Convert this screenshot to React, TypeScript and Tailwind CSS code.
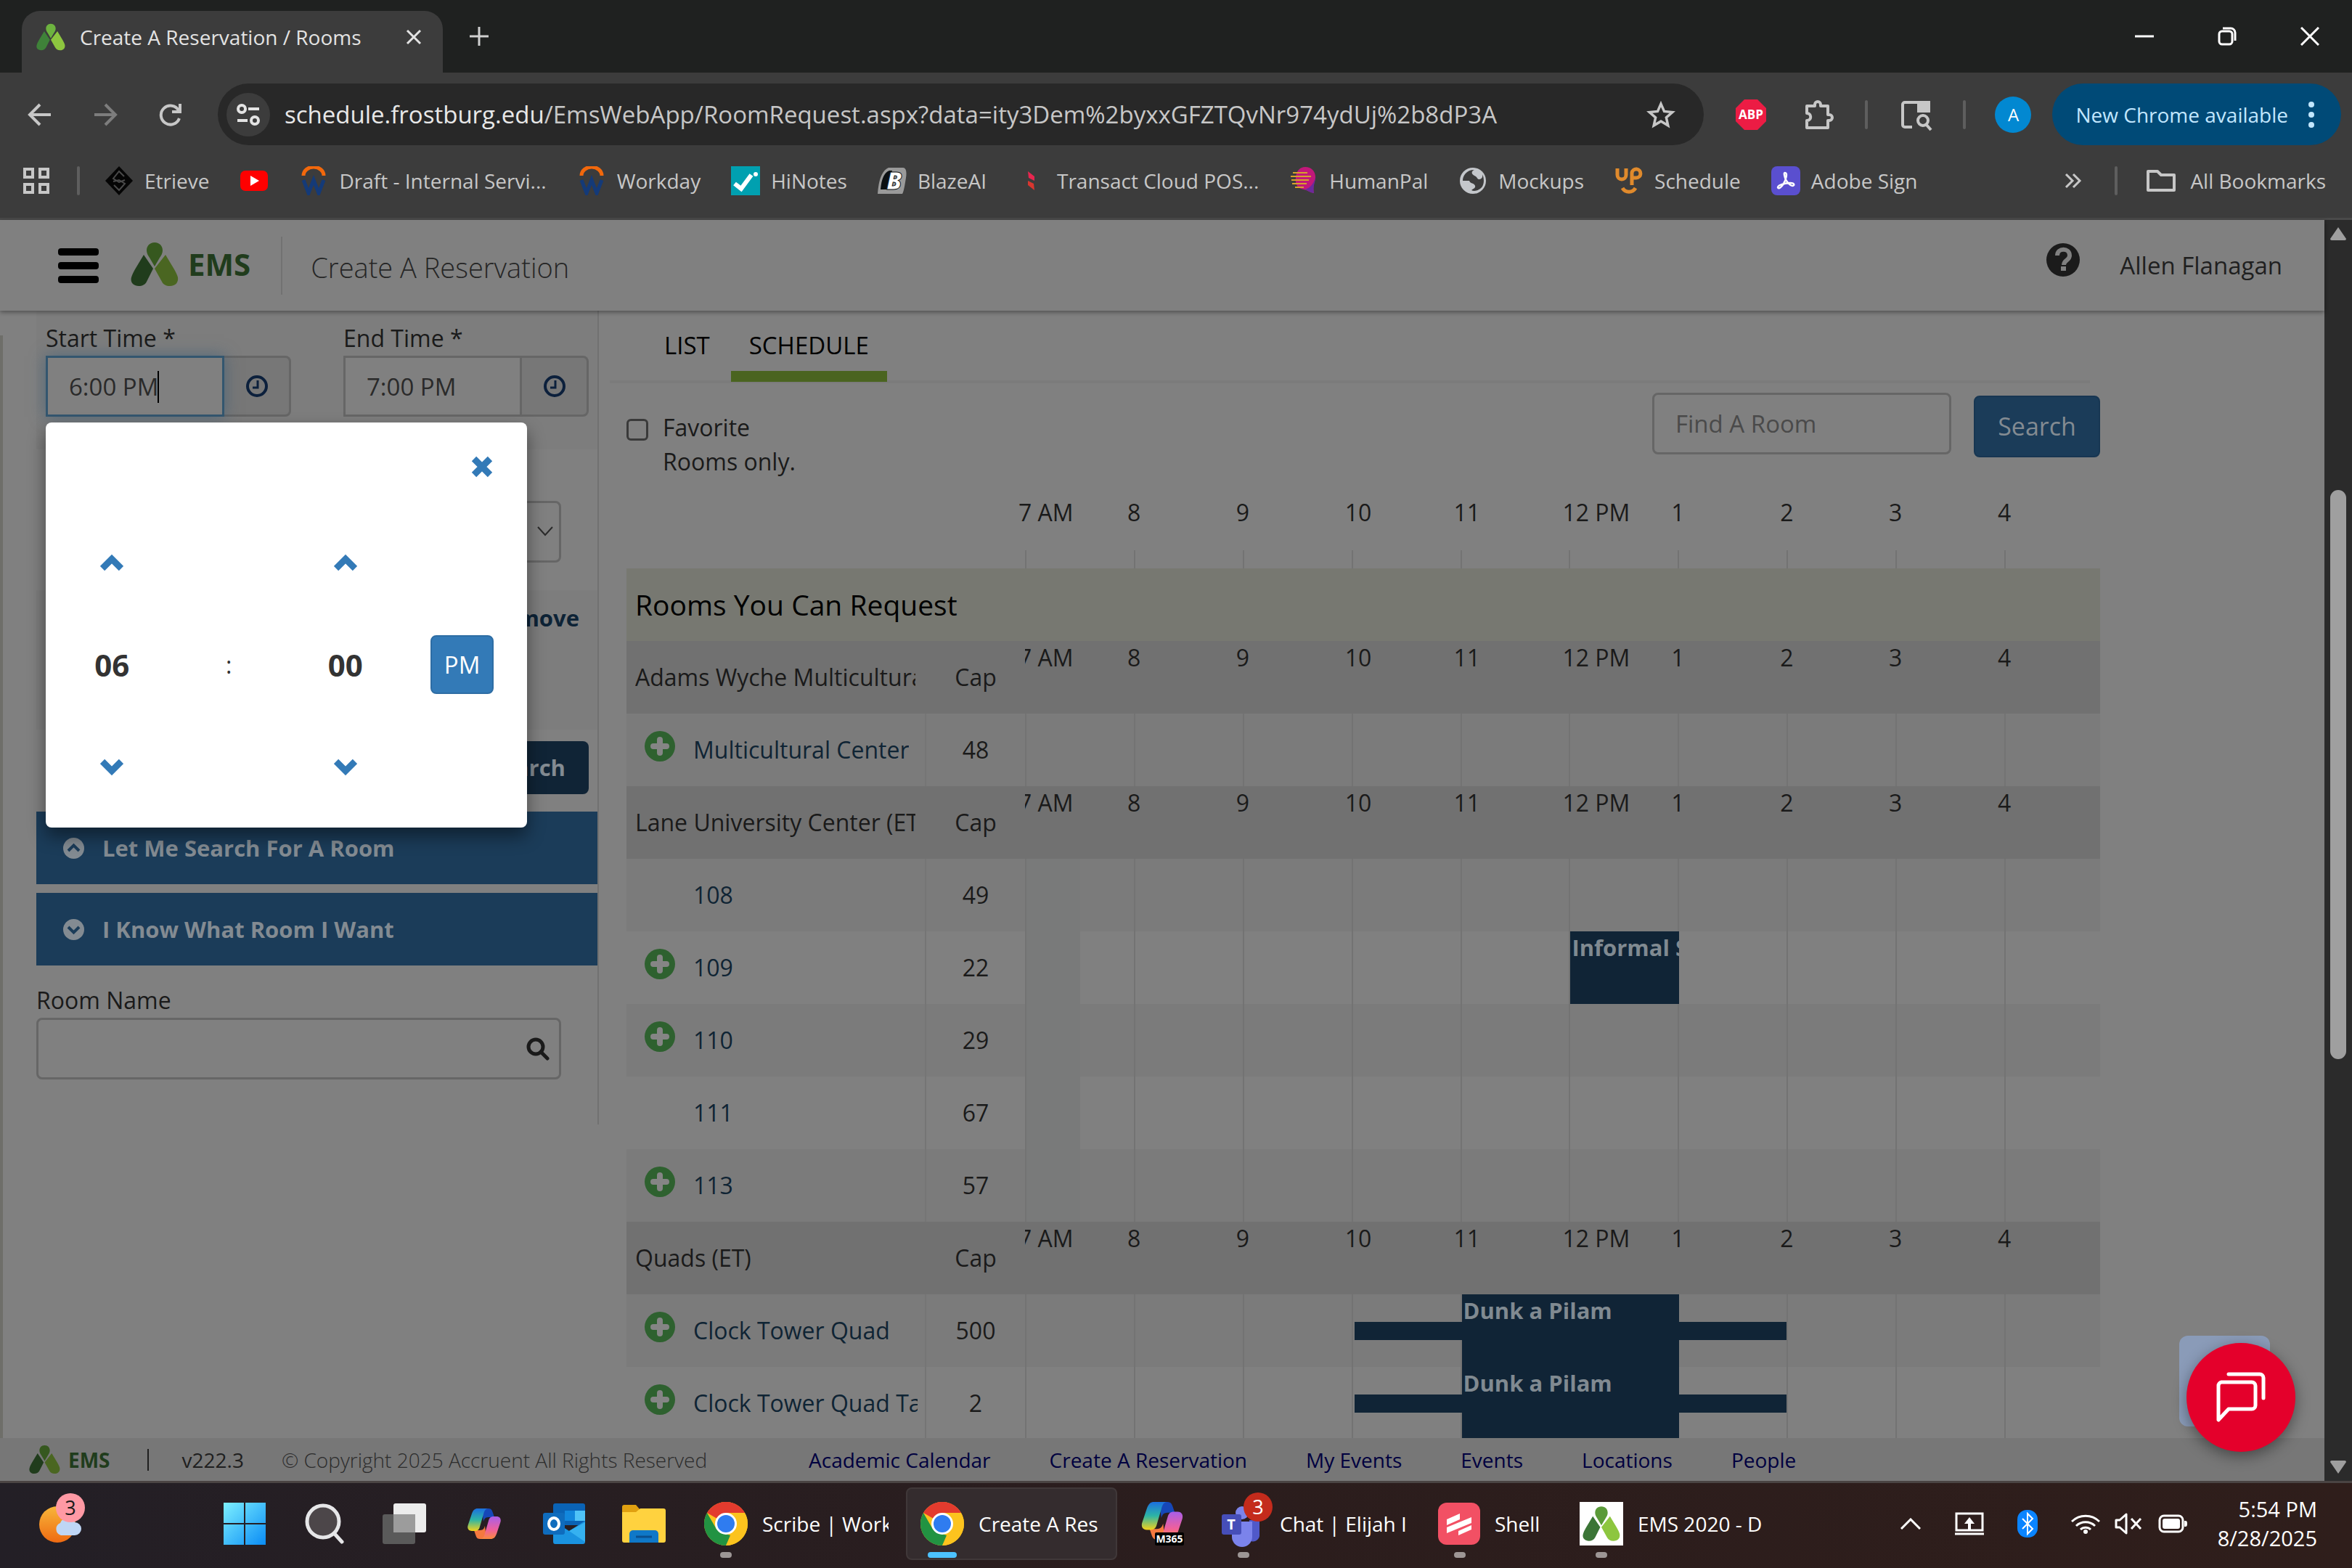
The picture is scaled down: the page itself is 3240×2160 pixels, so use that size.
import type { ReactNode } from 'react';

interface Booking {
    title: string;
    hours: number;
    lead?: boolean;
}

interface Room {
    name: string;
    cap: number;
    canAdd: boolean;
    bookings?: Record<string, Booking>;
}

interface Building {
    name: string;
    closedEarly: boolean;
    rooms: Room[];
}

const hours = ['7 AM', '8', '9', '10', '11', '12 PM', '1', '2', '3', '4'];

const buildings: Building[] = [
    {
        name: 'Adams Wyche Multicultural',
        closedEarly: false,
        rooms: [{ name: 'Multicultural Center', cap: 48, canAdd: true }],
    },
    {
        name: 'Lane University Center (ET)',
        closedEarly: true,
        rooms: [
            { name: '108', cap: 49, canAdd: false },
            { name: '109', cap: 22, canAdd: true, bookings: { '12 PM': { title: 'Informal S', hours: 1 } } },
            { name: '110', cap: 29, canAdd: true },
            { name: '111', cap: 67, canAdd: false },
            { name: '113', cap: 57, canAdd: true },
        ],
    },
    {
        name: 'Quads (ET)',
        closedEarly: false,
        rooms: [
            { name: 'Clock Tower Quad', cap: 500, canAdd: true, bookings: { '11': { title: 'Dunk a Pilam', hours: 2, lead: true } } },
            { name: 'Clock Tower Quad Table', cap: 2, canAdd: true, bookings: { '11': { title: 'Dunk a Pilam', hours: 2, lead: true } } },
        ],
    },
];

/* ---------- Shared drawings ---------- */

function EmsMark({ className, top, left, right }: { className: string; top: string; left: string; right: string }) {
    return (
        <svg className={className} viewBox="0 0 66 60">
            <path fill={top} d="M33 0c7 0 11 5 11 11 0 4-2 7-4 10l-7 12-7-12c-2-3-4-6-4-10C22 5 26 0 33 0z" />
            <path fill={left} d="M18 17l13 19-9 18c-2 4-6 6-11 6C4 60-1 55 1 48c1-4 3-7 5-11z" />
            <path fill={right} d="M48 17L33 36l10 18c2 4 6 6 11 6 8 0 12-5 11-12-1-4-3-7-5-11z" />
        </svg>
    );
}

function ChromeLogo() {
    return (
        <svg className="size-[60px] shrink-0" viewBox="0 0 60 60">
            <circle cx="30" cy="30" r="30" fill="#fcc31e" />
            <path fill="#e33b2e" d="M30 30L4 15a30 30 0 0 1 52 0z" />
            <path fill="#229342" d="M30 60A30 30 0 0 1 4 15l13 22.500L30 44l0 0 6 2z" />
            <path fill="#fcc31e" d="M30 15h26a30 30 0 0 1-26 45l13-22.500z" />
            <circle cx="30" cy="30" r="15" fill="#fff" />
            <circle cx="30" cy="30" r="12" fill="#2f7cf0" />
        </svg>
    );
}

function CopilotLogo({ className }: { className: string }) {
    return (
        <svg className={className} viewBox="0 0 46 42">
            <defs>
                <linearGradient id="cpA" x1="0" y1="0" x2="0" y2="1">
                    <stop offset="0" stopColor="#1b6fe0" />
                    <stop offset="0.5" stopColor="#2db5a5" />
                    <stop offset="1" stopColor="#f3d11b" />
                </linearGradient>
                <linearGradient id="cpB" x1="0" y1="0" x2="0" y2="1">
                    <stop offset="0" stopColor="#a85ee8" />
                    <stop offset="0.6" stopColor="#f0609b" />
                    <stop offset="1" stopColor="#fb8b3c" />
                </linearGradient>
            </defs>
            <path fill="#1647b8" d="M20 0h9c4 0 5 3 6 6l2 6h-8c-5 0-6 3-7 6z" />
            <path fill="#f5793f" d="M26 42h-9c-4 0-5-3-6-6l-2-6h8c5 0 6-3 7-6z" />
            <path fill="url(#cpA)" d="M14 0h14c-4 1-5 4-6 8l-5 17c-1 4-3 6-7 6H6c-5 0-7-4-5-9L6 7c2-5 4-7 8-7z" />
            <path fill="url(#cpB)" d="M32 42H18c4-1 5-4 6-8l5-17c1-4 3-6 7-6h4c5 0 7 4 5 9l-5 15c-2 5-4 7-8 7z" />
        </svg>
    );
}

function ClockIcon() {
    return (
        <svg className="size-[30px]" viewBox="0 0 30 30" fill="none" stroke="#0c203c">
            <circle cx="15" cy="15" r="13" strokeWidth="4" />
            <path d="M16 7v10H9" strokeWidth="3" />
        </svg>
    );
}

function PickerArrow({ down = false }: { down?: boolean }) {
    return (
        <svg className="h-[24px] w-[32px]" viewBox="0 0 32 24" fill="none" stroke="#337ab7" strokeWidth="9">
            <path d={down ? 'M3 4l13 13L29 4' : 'M3 20L16 7l13 13'} />
        </svg>
    );
}

/* ---------- Browser chrome ---------- */

function TabStrip() {
    return (
        <header className="flex h-[100px] shrink-0 items-end bg-[#1f2120] text-[#e3e3e3]">
            <div className="ml-[30px] flex h-[85px] w-[580px] items-center rounded-t-[25px] bg-[#3c3c3c] pb-[14px] pl-5">
                <EmsMark className="mr-[20px] size-[40px]" top="#6db33f" left="#3f8239" right="#8dc63f" />
                <span className="flex-1 whitespace-nowrap text-[28px]">Create A Reservation / Rooms</span>
                <button aria-label="Close tab" className="mr-[28px]">
                    <svg className="size-6" viewBox="0 0 24 24" stroke="#e3e3e3" strokeWidth="3"><path d="M3 3l18 18M21 3L3 21" /></svg>
                </button>
            </div>
            <button aria-label="New tab" className="mb-[36px] ml-[36px]">
                <svg className="size-7" viewBox="0 0 28 28" stroke="#d0d0d0" strokeWidth="3"><path d="M14 1v26M1 14h26" /></svg>
            </button>
            <div className="ml-auto flex items-center gap-[88px] self-center pr-[45px]">
                <button aria-label="Minimize">
                    <svg className="size-[26px]" viewBox="0 0 26 26" stroke="#fff" strokeWidth="3"><path d="M0 13h26" /></svg>
                </button>
                <button aria-label="Restore">
                    <svg className="size-[26px]" viewBox="0 0 26 26" fill="none" stroke="#fff" strokeWidth="3">
                        <rect x="2" y="6" width="18" height="18" rx="4" />
                        <path d="M7 2h11a6 6 0 0 1 6 6v11" />
                    </svg>
                </button>
                <button aria-label="Close">
                    <svg className="size-[26px]" viewBox="0 0 26 26" stroke="#fff" strokeWidth="3"><path d="M1 1l24 24M25 1L1 25" /></svg>
                </button>
            </div>
        </header>
    );
}

function Toolbar() {
    return (
        <div className="flex h-[115px] shrink-0 items-center bg-[#3c3c3c] pr-[15px]">
            <div className="flex w-[300px] items-center gap-[56px] pl-[38px]">
                <button aria-label="Back">
                    <svg className="size-[34px]" viewBox="0 0 34 34" fill="none" stroke="#c7c7c7" strokeWidth="4"><path d="M17 3L3 17l14 14M3 17h29" /></svg>
                </button>
                <button aria-label="Forward">
                    <svg className="size-[34px]" viewBox="0 0 34 34" fill="none" stroke="#7d7d7d" strokeWidth="4"><path d="M17 3l14 14-14 14M31 17H2" /></svg>
                </button>
                <button aria-label="Reload">
                    <svg className="size-[34px]" viewBox="0 0 34 34" fill="none" stroke="#c7c7c7" strokeWidth="4">
                        <path d="M29 22a13 13 0 1 1-1-11M30 2v11H19" />
                    </svg>
                </button>
            </div>
            <div className="flex h-[85px] flex-1 items-center rounded-full bg-[#282828] pl-3 pr-[38px]">
                <span className="flex size-[60px] shrink-0 items-center justify-center rounded-full bg-[#3c3c3c]">
                    <svg className="size-[32px]" viewBox="0 0 32 32" fill="none" stroke="#e3e3e3" strokeWidth="4">
                        <circle cx="7" cy="8" r="5" />
                        <path d="M16 8h15M1 24h14" />
                        <circle cx="25" cy="24" r="5" />
                    </svg>
                </span>
                <div className="ml-[20px] flex-1 whitespace-nowrap text-[33px] text-[#c7c7c7]">
                    <span className="text-[#e8e8e8]">schedule.frostburg.edu</span>/EmsWebApp/RoomRequest.aspx?data=ity3Dem%2byxxGFZTQvNr974ydUj%2b8dP3A
                </div>
                <button aria-label="Bookmark this tab">
                    <svg className="size-[42px]" viewBox="0 0 24 24" fill="none" stroke="#c7c7c7" strokeWidth="2">
                        <path d="M12 3.500l2.600 5.900 6.400.6-4.800 4.200 1.400 6.300L12 17.200l-5.600 3.300 1.400-6.300L3 10l6.400-.6z" />
                    </svg>
                </button>
            </div>
            <div className="flex w-[480px] items-center pl-[44px]">
                <svg className="size-[42px]" viewBox="0 0 42 42">
                    <path fill="#ec1c44" d="M12 0h18l12 12v18L30 42H12L0 30V12z" />
                    <text x="21" y="27" textAnchor="middle" fontSize="17" fontWeight="700" fill="#fff">ABP</text>
                </svg>
                <svg className="ml-[50px] size-[44px]" viewBox="0 0 44 44" fill="none" stroke="#c7c7c7" strokeWidth="4">
                    <path d="M6 10h11V8a4 4 0 0 1 8 0v2h10v12h2a4 4 0 0 1 0 8h-2v10H6V30c7 0 7-10 0-10z" strokeLinejoin="round" />
                </svg>
                <span className="ml-[42px] h-10 w-1 rounded bg-[#5e5e5e]" />
                <svg className="ml-[43px] size-[46px]" viewBox="0 0 46 46" fill="none" stroke="#c7c7c7" strokeWidth="4">
                    <path d="M18 40H8a3 3 0 0 1-3-3V9a3 3 0 0 1 3-3h33v14" />
                    <path d="M27 6h14v12H27z" fill="#c7c7c7" />
                    <circle cx="33" cy="31" r="7" />
                    <path d="M37 36l7 8" />
                </svg>
                <span className="ml-[42px] h-10 w-1 rounded bg-[#5e5e5e]" />
                <span className="ml-[40px] flex size-[50px] items-center justify-center rounded-full bg-[#0288d1] text-[24px] text-white">A</span>
            </div>
            <button className="flex h-[85px] items-center gap-[28px] whitespace-nowrap rounded-full bg-[#004a77] pl-[32px] pr-[37px] text-[28px] text-[#c2e7ff]">
                New Chrome available
                <svg className="h-[36px] w-[8px]" viewBox="0 0 8 36" fill="#c2e7ff">
                    <circle cx="4" cy="4" r="4" />
                    <circle cx="4" cy="18" r="4" />
                    <circle cx="4" cy="32" r="4" />
                </svg>
            </button>
        </div>
    );
}

function WorkdayIcon() {
    return (
        <svg className="size-10" viewBox="0 0 40 40" fill="none">
            <path d="M6 13a14 12 0 0 1 28 0" stroke="#f2680c" strokeWidth="5" />
            <path d="M6 19l7 18 7-18 7 18 7-18" stroke="#143a78" strokeWidth="5" />
        </svg>
    );
}

const bookmarks: { label: string; icon: ReactNode }[] = [
    {
        label: 'Etrieve',
        icon: (
            <svg className="size-10" viewBox="0 0 40 40">
                <path fill="#050505" d="M20 0l19 20-19 20L1 20z" />
                <path fill="none" stroke="#4a4a4a" strokeWidth="2" d="M27 14l-7-7-8 10 8 5 8-3M13 26l7 7 8-9-8-5-8 2" />
            </svg>
        ),
    },
    {
        label: '',
        icon: (
            <svg className="size-10" viewBox="0 0 40 40">
                <rect x="1" y="6" width="38" height="28" rx="7" fill="#f00" />
                <path d="M15 13l12 7-12 7z" fill="#fff" />
            </svg>
        ),
    },
    { label: 'Draft - Internal Servi...', icon: <WorkdayIcon /> },
    { label: 'Workday', icon: <WorkdayIcon /> },
    {
        label: 'HiNotes',
        icon: (
            <svg className="size-10" viewBox="0 0 40 40">
                <path fill="#00a0b0" d="M0 0h40v40H0z" />
                <path fill="none" stroke="#fff" strokeWidth="6" d="M5 24l9 7 14-19" />
                <circle cx="34" cy="11" r="3" fill="#fff" />
            </svg>
        ),
    },
    {
        label: 'BlazeAI',
        icon: (
            <svg className="size-10" viewBox="0 0 40 40">
                <path fill="#9a9a9a" d="M15 2h20c5 0 5 8 4 14s-3 20-5 22H0C1 22 5 6 15 2z" />
                <path fill="#0b0f12" d="M16 6c-8 3-11 14-12 26h9L20 6z" />
                <text x="12" y="32" fontSize="34" fontWeight="800" fontStyle="italic" fill="#fff" stroke="#0b0f12" strokeWidth="1">B</text>
            </svg>
        ),
    },
    {
        label: 'Transact Cloud POS...',
        icon: (
            <svg className="size-10" viewBox="0 0 40 40">
                <path fill="#e8264f" d="M15 7l9 7v6l-8-4z" />
                <path fill="#d8362f" d="M24 33l-9-7v-6l8 4z" />
            </svg>
        ),
    },
    {
        label: 'HumanPal',
        icon: (
            <svg className="size-10" viewBox="0 0 40 40">
                <path fill="#c2187a" d="M22 1c9 0 15 7 14 16-1 6-4 9-2 20-6-1-9-4-14-5C10 30 8 24 9 15 10 6 15 1 22 1z" />
                <path fill="#6b2a9c" d="M36 15c0 8-4 12-2 22-6-1-9-4-13-5 8-2 13-8 15-17z" />
                <path stroke="#d8a02c" strokeWidth="2" fill="none" d="M5 9h20M2 14h28M3 19h24M4 24h20M8 29h12" />
            </svg>
        ),
    },
    {
        label: 'Mockups',
        icon: (
            <svg className="size-10" viewBox="0 0 40 40">
                <circle cx="20" cy="20" r="18" fill="#c4c7cb" />
                <path fill="#3c3c3c" d="M22 5c-5 2-4 6 0 8 5 2 3 5 7 5 3 0 5-3 4-7 3 6 3 16-3 20-4 3-9 4-12 2 2-2 6-3 5-6-1-4-7-3-8-7H6c0-7 5-15 16-15z" />
            </svg>
        ),
    },
    {
        label: 'Schedule',
        icon: (
            <svg className="size-10" viewBox="0 0 40 40" fill="none" stroke="#e08a2c" strokeWidth="5">
                <path d="M4 3v9a6 6 0 0 0 12 0V3M24 26V9a6 6 0 1 1 6 7h-6" />
                <path d="M11 30c4 7 14 7 18 0" />
            </svg>
        ),
    },
    {
        label: 'Adobe Sign',
        icon: (
            <svg className="size-10" viewBox="0 0 40 40">
                <rect width="40" height="40" rx="8" fill="#5a4fcf" />
                <path fill="none" stroke="#fff" strokeWidth="2.500" d="M19 9c4 0 1 10-2 15s-7 8-8 5c0-3 10-6 17-6s6 4 3 4-9-7-10-11-2-7 0-7z" />
            </svg>
        ),
    },
];

function BookmarksBar() {
    return (
        <nav className="flex h-[88px] shrink-0 items-center border-b-[3px] border-[#4a4a4a] bg-[#3c3c3c] pb-[18px] pl-[31px] pr-[36px] text-[28px] text-[#c7c7c7]">
            <svg className="size-[38px]" viewBox="0 0 38 38" fill="none" stroke="#c7c7c7" strokeWidth="4">
                <path d="M3 3h11v11H3zM24 3h11v11H24zM3 24h11v11H3zM24 24h11v11H24z" />
            </svg>
            <span className="ml-[37px] mr-[34px] h-10 w-1 rounded bg-[#5e5e5e]" />
            <div className="flex flex-1 items-center gap-[42px]">
                {bookmarks.map((item, index) => (
                    <a key={index} href="#bookmark" aria-label={item.label || 'YouTube'} className="flex items-center gap-[15px] whitespace-nowrap">
                        {item.icon}
                        {item.label && <span>{item.label}</span>}
                    </a>
                ))}
            </div>
            <svg className="size-6" viewBox="0 0 24 24" fill="none" stroke="#c7c7c7" strokeWidth="3"><path d="M2 3l9 9-9 9M12 3l9 9-9 9" /></svg>
            <span className="ml-[45px] mr-[40px] h-10 w-1 rounded bg-[#5e5e5e]" />
            <a href="#all" className="flex items-center gap-[20px] whitespace-nowrap">
                <svg className="h-[32px] w-[40px]" viewBox="0 0 40 32" fill="none" stroke="#c7c7c7" strokeWidth="4" strokeLinejoin="round">
                    <path d="M2 29V3h13l5 5h18v21z" />
                </svg>
                All Bookmarks
            </a>
        </nav>
    );
}

/* ---------- EMS page ---------- */

function PageHeader() {
    return (
        <div className="relative z-10 flex h-[125px] shrink-0 items-center bg-[#808080] pl-[80px] pr-[58px] shadow-[0_2px_6px_rgba(0,0,0,0.4)]">
            <button aria-label="Menu" className="flex w-14 flex-col gap-[9px]">
                <span className="h-[10px] rounded-sm bg-black" />
                <span className="h-[10px] rounded-sm bg-black" />
                <span className="h-[10px] rounded-sm bg-black" />
            </button>
            <a href="#home" className="ml-[44px] flex items-center gap-[13px] pb-[4px]">
                <EmsMark className="h-[60px] w-[66px]" top="#36581f" left="#203c1c" right="#4a6621" />
                <span className="text-[42px] font-bold text-[#203c1c]">EMS</span>
            </a>
            <span className="ml-[42px] h-[80px] w-[2px] bg-[#727272]" />
            <h1 className="ml-[39px] pt-[6px] text-[38px] font-light text-[#262626]">Create A Reservation</h1>
            <button aria-label="Help" className="ml-auto pb-4">
                <svg className="size-[46px]" viewBox="0 0 46 46">
                    <circle cx="23" cy="23" r="23" fill="#1b1b1b" />
                    <path d="M15 17c0-11 17-11 17 0 0 7-8 6-8 13" fill="none" stroke="#808080" strokeWidth="6" />
                    <path d="M20 32h7v6h-7z" fill="#808080" />
                </svg>
            </button>
            <a href="#account" className="ml-[55px] text-[33px] text-[#1f1f1f]">Allen Flanagan</a>
        </div>
    );
}

function TimePicker() {
    return (
        <div role="dialog" aria-label="Start time" className="absolute left-0 top-full z-20 mt-[8px] w-[663px] rounded-lg bg-white pb-[13px] pl-[11px] pr-[9px] text-[#333] shadow-[0_12px_24px_rgba(0,0,0,0.45)]">
            <div className="flex h-[122px] items-center justify-end pr-[38px]">
                <button aria-label="Close picker">
                    <svg className="size-[30px]" viewBox="0 0 30 30" stroke="#337ab7" strokeWidth="9"><path d="M4 4l22 22M26 4L4 26" /></svg>
                </button>
            </div>
            <div className="grid auto-rows-[141px] grid-cols-4 place-items-center">
                <button aria-label="Hour up"><PickerArrow /></button>
                <span />
                <button aria-label="Minute up"><PickerArrow /></button>
                <span />
                <button className="text-[42px] font-bold">06</button>
                <span>:</span>
                <button className="text-[42px] font-bold">00</button>
                <button className="h-[81px] w-[87px] rounded-lg border-2 border-[#2e6da4] bg-[#337ab7] text-[33px] text-white">PM</button>
                <button aria-label="Hour down"><PickerArrow down /></button>
                <span />
                <button aria-label="Minute down"><PickerArrow down /></button>
            </div>
        </div>
    );
}

function TimeField({ id, label, value, active = false, children }: { id: string; label: string; value: string; active?: boolean; children?: ReactNode }) {
    return (
        <div className="relative w-[338px]">
            <label htmlFor={id} className="block h-[48px]">{label}</label>
            <div className="flex h-[84px]">
                <div
                    className={
                        active
                            ? 'relative w-[246px] border-[3px] border-[#33566f] bg-[#808080] shadow-[0_0_20px_rgba(51,90,120,0.6)]'
                            : 'relative w-[246px] border-[3px] border-[#666] bg-[#808080]'
                    }
                >
                    <input id={id} defaultValue={value} className="h-full w-full bg-transparent pl-[29px] text-[33px] text-[#2a2a2a] outline-none" />
                    {active && <span className="absolute left-[151px] top-[18px] h-[44px] w-[2px] bg-black" />}
                </div>
                <button aria-label={`Pick ${label}`} className="flex w-[92px] items-center justify-center rounded-r-lg border-[3px] border-l-0 border-[#666] bg-[#777]">
                    <ClockIcon />
                </button>
            </div>
            {children}
        </div>
    );
}

function AccordionButton({ label, open }: { label: string; open: boolean }) {
    return (
        <button className="mb-3 flex h-[100px] w-full items-center gap-[25px] bg-[#1b3c59] pl-[37px] text-[31px] font-bold text-[#838b92]">
            <svg className="size-[29px]" viewBox="0 0 29 29">
                <circle cx="14.500" cy="14.500" r="14.500" fill="#838b92" />
                <path d={open ? 'M7 18l7.500-7.500L22 18' : 'M7 11l7.500 7.500L22 11'} fill="none" stroke="#1b3c59" strokeWidth="4" />
            </svg>
            {label}
        </button>
    );
}

function Sidebar() {
    return (
        <aside className="h-[1121px] w-[821px] shrink-0 border-r-2 border-[#717171] pl-[46px]">
            <div className="flex h-[191px] items-start gap-[72px] bg-[#7d7d7d] pl-[13px] pt-[14px]">
                <TimeField id="start" label="Start Time *" value="6:00 PM" active>
                    <TimePicker />
                </TimeField>
                <TimeField id="end" label="End Time *" value="7:00 PM" />
            </div>
            <div className="relative h-[194px] pl-[13px] pr-[50px] pt-[71px]">
                <select aria-label="Time zone" className="h-[85px] w-full appearance-none rounded-lg border-[3px] border-[#666] bg-[#808080]" />
                <svg className="pointer-events-none absolute right-[61px] top-[106px] h-[14px] w-[22px]" viewBox="0 0 22 14" fill="none" stroke="#2a2a2a" strokeWidth="2"><path d="M1 1l10 11L21 1" /></svg>
            </div>
            <div className="flex h-[192px] justify-end bg-[#7d7d7d] pr-[25px] pt-[15px]">
                <a href="#remove" className="text-[31px] font-bold text-[#0d2336]">Remove</a>
            </div>
            <div className="flex h-[113px] justify-end pr-[12px] pt-4">
                <button className="h-[73px] rounded-lg bg-[#102436] px-[32px] text-[31px] font-bold text-[#838b92]">Search</button>
            </div>
            <AccordionButton label="Let Me Search For A Room" open />
            <AccordionButton label="I Know What Room I Want" open={false} />
            <label htmlFor="room" className="mt-[24px] block h-[48px]">Room Name</label>
            <div className="mr-[50px] flex h-[85px] items-center rounded-lg border-[3px] border-[#666] pr-[13px]">
                <input id="room" className="h-full min-w-0 flex-1 bg-transparent px-4 outline-none" />
                <svg className="size-[32px]" viewBox="0 0 32 32" fill="none" stroke="#1a1a1a" strokeWidth="5">
                    <circle cx="13" cy="13" r="10" />
                    <path d="M20 20l9 9" strokeLinecap="round" />
                </svg>
            </div>
        </aside>
    );
}

function BookingBlock({ booking }: { booking: Booking }) {
    // each hour cell adds a 2px rule to the width that percentages resolve against
    const span = `calc(${booking.hours * 100}% + ${booking.hours * 2}px)`;
    return (
        <>
            {booking.lead && (
                <>
                    <div className="absolute right-full top-[38px] h-[25px] w-full bg-[#102436]" />
                    <div className="absolute top-[38px] z-10 h-[25px] w-full bg-[#102436]" style={{ left: span }} />
                </>
            )}
            <a href="#booking" className="absolute inset-y-0 left-0 z-10 overflow-hidden whitespace-nowrap bg-[#102436] pl-[2px] text-[31px] font-bold leading-[45px] text-[#808a91]" style={{ width: span }}>
                {booking.title}
            </a>
        </>
    );
}

function Schedule() {
    return (
        <table className="w-full table-fixed border-separate border-spacing-0 text-left">
            <colgroup>
                <col className="w-[413px]" />
                <col className="w-[136px]" />
                {hours.map((hour) => (
                    <col key={hour} className={hour === '4' ? 'w-[132px]' : ''} />
                ))}
            </colgroup>
            <thead>
                <tr className="h-[100px]">
                    <td colSpan={2} />
                    {hours.map((hour) => (
                        <th key={hour} scope="col" className="p-0 align-top font-normal leading-[45px]">
                            <div className="-ml-[9px] h-[75px] whitespace-nowrap">{hour}</div>
                            <div className="h-[25px] border-l-2 border-[#737373]" />
                        </th>
                    ))}
                </tr>
                <tr className="h-[100px] bg-[#777871]">
                    <th colSpan={12} className="p-0 pl-[12px] text-[39px] font-normal text-black">Rooms You Can Request</th>
                </tr>
            </thead>
            {buildings.map((building) => (
                <tbody key={building.name}>
                    <tr className="h-[100px] bg-[#717171]">
                        <th scope="rowgroup" className="overflow-hidden whitespace-nowrap p-0 pl-[12px] pr-[15px] font-normal">
                            <div className="overflow-hidden">{building.name}</div>
                        </th>
                        <td className="p-0 text-center">Cap</td>
                        {hours.map((hour, index) => (
                            <td key={hour} className={index === 0 ? 'overflow-hidden p-0 align-top leading-[45px]' : 'p-0 align-top leading-[45px]'}>
                                <div className="-ml-[9px] whitespace-nowrap">{hour}</div>
                            </td>
                        ))}
                    </tr>
                    {building.rooms.map((room, row) => (
                        <tr key={room.name} className={row % 2 === 0 ? 'h-[100px] bg-[#7b7b7b]' : 'h-[100px]'}>
                            <th scope="row" className="border-r-2 border-[#757575] p-0 pl-[25px] pr-[10px] font-normal">
                                <div className="flex items-center gap-[25px]">
                                    <span className="w-[42px] shrink-0 pb-[10px]">
                                        {room.canAdd && (
                                            <button aria-label={`Add ${room.name}`} className="block">
                                                <svg className="size-[42px]" viewBox="0 0 42 42">
                                                    <circle cx="21" cy="21" r="21" fill="#2e612f" />
                                                    <path d="M21 12v18M12 21h18" stroke="#858585" strokeWidth="8" strokeLinecap="round" />
                                                </svg>
                                            </button>
                                        )}
                                    </span>
                                    <a href="#room" className="overflow-hidden whitespace-nowrap text-[#0f2434]">{room.name}</a>
                                </div>
                            </th>
                            <td className="p-0 text-center">{room.cap}</td>
                            {hours.map((hour, index) => (
                                <td key={hour} className="relative border-l-2 border-[#737373] p-0">
                                    {building.closedEarly && index === 0 && <div className="h-[100px] w-1/2 bg-[#797a7a]" />}
                                    {room.bookings?.[hour] && <BookingBlock booking={room.bookings[hour]} />}
                                </td>
                            ))}
                        </tr>
                    ))}
                </tbody>
            ))}
        </table>
    );
}

function RoomResults() {
    return (
        <main className="min-w-0 flex-1 pl-[15px] pr-[309px]">
            <div role="tablist" className="mr-[14px] flex h-[100px] border-b-4 border-[#7b7b7b] pl-[50px] text-[33px] text-black">
                <button role="tab" className="h-[98px] border-b-[15px] border-transparent px-[25px] pt-3">LIST</button>
                <button role="tab" aria-selected="true" className="ml-[4px] h-[98px] border-b-[15px] border-[#4a6420] px-[25px] pt-3">SCHEDULE</button>
            </div>
            <div className="pl-[23px]">
                <div className="flex h-[155px] items-start">
                    <label className="flex w-[260px] items-start gap-[20px] pt-[37px] leading-[47px]">
                        <input type="checkbox" className="mt-[12px] size-[30px] shrink-0 appearance-none rounded-md border-[3px] border-[#3a3a3a]" />
                        Favorite Rooms only.
                    </label>
                    <input placeholder="Find A Room" aria-label="Find A Room" className="ml-auto mt-[13px] h-[85px] w-[412px] rounded-lg border-[3px] border-[#666] pl-[29px] text-[33px] placeholder:text-[#4a4a4a]" />
                    <button className="ml-[31px] mt-[17px] h-[85px] w-[174px] rounded-lg border-2 border-[#173652] bg-[#1b3c59] text-[34px] text-[#838b92]">Search</button>
                </div>
                <Schedule />
            </div>
        </main>
    );
}

function PageFooter() {
    return (
        <footer className="flex h-[59px] shrink-0 items-center bg-[#777] pl-[40px] text-[28px]">
            <EmsMark className="h-[39px] w-[43px]" top="#36581f" left="#203c1c" right="#4a6621" />
            <span className="ml-[11px] text-[28px] font-bold text-[#203c1c]">EMS</span>
            <span className="ml-[51px] h-[30px] w-[2px] bg-[#1f1f1f]" />
            <span className="ml-[46px] text-[#1f1f1f]">v222.3</span>
            <span className="ml-[52px] whitespace-nowrap font-light text-[#2c2c2c]">© Copyright 2025 Accruent All Rights Reserved</span>
            <div className="ml-[140px] flex gap-[81px] whitespace-nowrap text-[#00003f]">
                <a href="#calendar">Academic Calendar</a>
                <a href="#create">Create A Reservation</a>
                <a href="#mine">My Events</a>
                <a href="#events">Events</a>
                <a href="#locations">Locations</a>
                <a href="#people">People</a>
            </div>
        </footer>
    );
}

function ChatLauncher() {
    return (
        <div className="absolute bottom-[40px] right-[40px] z-20 size-[160px]">
            <div className="size-[125px] rounded-xl bg-[#8a9bb8]" />
            <button aria-label="Open chat" className="absolute bottom-0 right-0 flex size-[150px] items-center justify-center rounded-full bg-[#e4002b] shadow-[0_6px_20px_rgba(0,0,0,0.4)]">
                <svg className="size-[70px]" viewBox="0 0 70 70" fill="none" stroke="#fff" strokeWidth="5" strokeLinecap="round" strokeLinejoin="round">
                    <path d="M8 14h42a5 5 0 0 1 5 5v27a5 5 0 0 1-5 5H18L4 66V19a5 5 0 0 1 4-5z" />
                    <path d="M18 3h43a5 5 0 0 1 5 5v28" />
                </svg>
            </button>
        </div>
    );
}

function Scrollbar() {
    return (
        <div className="flex w-[38px] shrink-0 flex-col items-center bg-[#2b2b2b] py-[10px]">
            <svg className="h-[18px] w-6" viewBox="0 0 24 18" fill="#9f9f9f"><path d="M12 0l11 16q0 2-2 2H3q-2 0-2-2z" /></svg>
            <div className="mt-[344px] h-[784px] w-[22px] rounded-full bg-[#9f9f9f]" />
            <svg className="mt-auto h-[18px] w-6" viewBox="0 0 24 18" fill="#9f9f9f"><path d="M12 18L1 2q0-2 2-2h18q2 0 2 2z" /></svg>
        </div>
    );
}

/* ---------- Windows taskbar ---------- */

function TaskIcon({ label, children }: { label: string; children: ReactNode }) {
    return (
        <button aria-label={label} className="flex h-[100px] w-[110px] shrink-0 items-center justify-center">
            {children}
        </button>
    );
}

function TaskWindow({ label, active = false, narrow = false, children }: { label: string; active?: boolean; narrow?: boolean; children: ReactNode }) {
    return (
        <button
            className={`relative flex h-[100px] shrink-0 items-center gap-5 rounded-lg border-2 pl-[18px] text-left ${narrow ? 'w-[188px]' : 'w-[291px]'} ${active ? 'border-[#403839] bg-[#342c2e]' : 'border-transparent'}`}
        >
            {children}
            <span className={narrow ? 'whitespace-nowrap' : 'w-[174px] overflow-hidden whitespace-nowrap'}>{label}</span>
            <span className={active ? 'absolute bottom-[1px] left-[28px] h-2 w-10 rounded-full bg-[#4cc2ff]' : 'absolute bottom-[1px] left-[40px] h-2 w-4 rounded-full bg-[#9d9695]'} />
        </button>
    );
}

function Taskbar() {
    return (
        <footer className="flex h-[120px] shrink-0 items-center border-t-[3px] border-[#4a4443] bg-linear-to-r from-[#231f26] via-[#2b1d1d] to-[#2f1e1b] pb-[5px] text-[28px] text-white">
            <button aria-label="Weather" className="ml-[50px] mr-[128px] flex w-[74px] items-center">
                <svg className="h-[84px] w-[74px]" viewBox="0 0 74 84">
                    <defs>
                        <linearGradient id="sun" x1="0" y1="0" x2="0" y2="1">
                            <stop offset="0" stopColor="#f8b63a" />
                            <stop offset="1" stopColor="#ee6a12" />
                        </linearGradient>
                    </defs>
                    <circle cx="29" cy="43" r="25" fill="url(#sun)" />
                    <path d="M34 58a9 9 0 0 1-1-17 11 11 0 0 1 20-1 9 9 0 0 1 0 18z" fill="#bfd6f5" />
                    <circle cx="47" cy="20" r="20" fill="#ff99a4" />
                    <text x="47" y="30" textAnchor="middle" fontSize="27" fill="#1a1a1a">3</text>
                </svg>
            </button>
            <div className="ml-[30px] flex items-center">
                <TaskIcon label="Start">
                    <svg className="size-[58px]" viewBox="0 0 58 58">
                        <defs>
                            <linearGradient id="win" x1="0" y1="0" x2="1" y2="1">
                                <stop offset="0" stopColor="#7df0ff" />
                                <stop offset="1" stopColor="#0a8cf5" />
                            </linearGradient>
                        </defs>
                        <path fill="url(#win)" d="M0 0h28v28H0zM30 0h28v28H30zM0 30h28v28H0zM30 30h28v28H30z" />
                    </svg>
                </TaskIcon>
                <TaskIcon label="Search">
                    <svg className="size-[56px]" viewBox="0 0 56 56" fill="none" stroke="#e6e6e8" strokeWidth="5">
                        <circle cx="26" cy="25" r="22" fill="#4c4649" />
                        <path d="M42 42l10 11" strokeLinecap="round" />
                    </svg>
                </TaskIcon>
                <TaskIcon label="Task view">
                    <svg className="h-[56px] w-[60px]" viewBox="0 0 60 56">
                        <rect x="15" width="45" height="40" rx="3" fill="#ececec" />
                        <rect y="15" width="45" height="41" rx="3" fill="#5a5a5a" />
                        <path fill="#9c9c9c" d="M15 15h30v25H15z" />
                    </svg>
                </TaskIcon>
                <TaskIcon label="Copilot"><CopilotLogo className="h-[42px] w-[46px]" /></TaskIcon>
                <TaskIcon label="Outlook">
                    <svg className="h-[56px] w-[58px]" viewBox="0 0 58 56">
                        <rect x="14" width="44" height="30" rx="3" fill="#0a63b5" />
                        <path fill="#1287dd" d="M30 10h14v14H30z" />
                        <path fill="#4fc3f7" d="M44 10h14v14H44z" />
                        <path fill="#1a93e0" d="M14 24l22 14 22-14v29a3 3 0 0 1-3 3H17a3 3 0 0 1-3-3z" />
                        <path fill="#35b1f0" d="M58 26v27L36 38z" />
                        <rect y="13" width="30" height="30" rx="3" fill="#0f6cbd" />
                        <ellipse cx="15" cy="28" rx="7" ry="8" fill="none" stroke="#fff" strokeWidth="4" />
                    </svg>
                </TaskIcon>
                <TaskIcon label="File Explorer">
                    <svg className="h-[54px] w-[60px]" viewBox="0 0 60 54">
                        <path fill="#e0a010" d="M0 4a3 3 0 0 1 3-3h16l6 7v10H0z" />
                        <path fill="#ffd23f" d="M0 11h19l6-5h32a3 3 0 0 1 3 3v41a3 3 0 0 1-3 3H3a3 3 0 0 1-3-3z" />
                        <path fill="#0f78c8" d="M10 53V41a5 5 0 0 1 5-5h30a5 5 0 0 1 5 5v12z" />
                        <path stroke="#0a4f8f" strokeWidth="3" d="M19 45h22" />
                    </svg>
                </TaskIcon>
            </div>
            <div className="ml-[8px] flex items-center gap-[7px]">
                <TaskWindow label="Scribe | Work"><ChromeLogo /></TaskWindow>
                <TaskWindow label="Create A Res" active><ChromeLogo /></TaskWindow>
                <TaskIcon label="Microsoft 365 Copilot">
                    <svg className="size-[60px]" viewBox="0 0 60 60">
                        <svg width="60" height="52"><CopilotLogo className="h-[52px] w-[60px]" /></svg>
                        <rect x="20" y="42" width="40" height="18" rx="2" fill="#000" />
                        <text x="40" y="56" textAnchor="middle" fontSize="14" fontWeight="700" fill="#fff">M365</text>
                    </svg>
                </TaskIcon>
                <TaskWindow label="Chat | Elijah I">
                    <svg className="h-[70px] w-[60px] shrink-0 overflow-visible" viewBox="0 0 60 70">
                        <circle cx="28" cy="20" r="9" fill="#7b83eb" />
                        <path fill="#5059c9" d="M38 30h14v22a9 9 0 0 1-14 6z" />
                        <path fill="#7b83eb" d="M14 32h28v21a14 14 0 0 1-28 0z" />
                        <rect y="22" width="27" height="28" rx="3" fill="#464eb8" />
                        <text x="13" y="43" textAnchor="middle" fontSize="20" fontWeight="700" fill="#fff">T</text>
                        <circle cx="50" cy="12" r="20" fill="#c42b1c" />
                        <text x="50" y="22" textAnchor="middle" fontSize="27" fill="#fff">3</text>
                    </svg>
                </TaskWindow>
                <TaskWindow label="Shell" narrow>
                    <svg className="size-[58px] shrink-0" viewBox="0 0 58 58">
                        <rect width="58" height="58" rx="12" fill="#f25064" />
                        <path fill="#fff" d="M12 23l18-8v8l-18 8zM12 34l34-14v8L12 42zM28 39l18-8v6l-18 8z" />
                    </svg>
                </TaskWindow>
                <TaskWindow label="EMS 2020 - D">
                    <span className="flex size-[60px] shrink-0 items-center justify-center bg-white">
                        <EmsMark className="size-[52px]" top="#5a9a38" left="#3b7536" right="#8dc63f" />
                    </span>
                </TaskWindow>
            </div>
            <div className="ml-auto flex items-center pr-[48px]">
                <svg className="h-[16px] w-[28px]" viewBox="0 0 28 16" fill="none" stroke="#fff" strokeWidth="3"><path d="M1 15L14 2l13 13" /></svg>
                <svg className="ml-[47px] h-[32px] w-[40px]" viewBox="0 0 40 32" fill="none" stroke="#fff" strokeWidth="3">
                    <path d="M2 2h36v23H2zM0 30h40" />
                    <path d="M20 25V13" strokeWidth="4" />
                    <path d="M13 16l7-9 7 9z" fill="#fff" stroke="none" />
                </svg>
                <svg className="ml-[46px] h-[38px] w-[28px]" viewBox="0 0 28 38">
                    <rect width="28" height="38" rx="13" fill="#0a84ff" />
                    <path d="M7 12l14 14-7 7V5l7 7L7 26" fill="none" stroke="#fff" strokeWidth="2" />
                </svg>
                <svg className="ml-[46px] h-[30px] w-[40px]" viewBox="0 0 40 30" fill="none" stroke="#fff" strokeWidth="3">
                    <path d="M1 12a27 27 0 0 1 38 0M7 18a19 19 0 0 1 26 0M13 23a10 10 0 0 1 14 0" />
                    <circle cx="20" cy="26" r="3" fill="#fff" stroke="none" />
                </svg>
                <svg className="ml-[20px] h-[30px] w-[38px]" viewBox="0 0 38 30" fill="none" stroke="#fff" strokeWidth="3">
                    <path d="M2 10h5l9-8v26l-9-8H2z" strokeLinejoin="round" />
                    <path d="M23 8l13 14M36 8L23 22" />
                </svg>
                <svg className="ml-[22px] h-[26px] w-[40px]" viewBox="0 0 40 26">
                    <rect x="2" y="2" width="32" height="22" rx="6" fill="none" stroke="#fff" strokeWidth="3" />
                    <rect x="6" y="6" width="24" height="14" rx="3" fill="#fff" />
                    <path d="M36 9h2q2 0 2 4t-2 4h-2z" fill="#fff" />
                </svg>
                <div className="ml-[42px] text-right text-[29px] leading-[40px]">
                    <div>5:54 PM</div>
                    <div>8/28/2025</div>
                </div>
            </div>
        </footer>
    );
}

export default function App() {
    return (
        <div className="flex h-screen flex-col overflow-hidden bg-[#808080] font-['Open_Sans',sans-serif] text-[32px] text-[#1a1a1a]">
            <TabStrip />
            <Toolbar />
            <BookmarksBar />
            <div className="flex min-h-0 flex-1">
                <div className="relative flex min-w-0 flex-1 flex-col">
                    <PageHeader />
                    <div className="flex min-h-0 flex-1 overflow-hidden">
                        <div className="mt-[34px] w-1 shrink-0 bg-[#6e6e69]" />
                        <Sidebar />
                        <RoomResults />
                    </div>
                    <PageFooter />
                    <ChatLauncher />
                </div>
                <Scrollbar />
            </div>
            <Taskbar />
        </div>
    );
}
